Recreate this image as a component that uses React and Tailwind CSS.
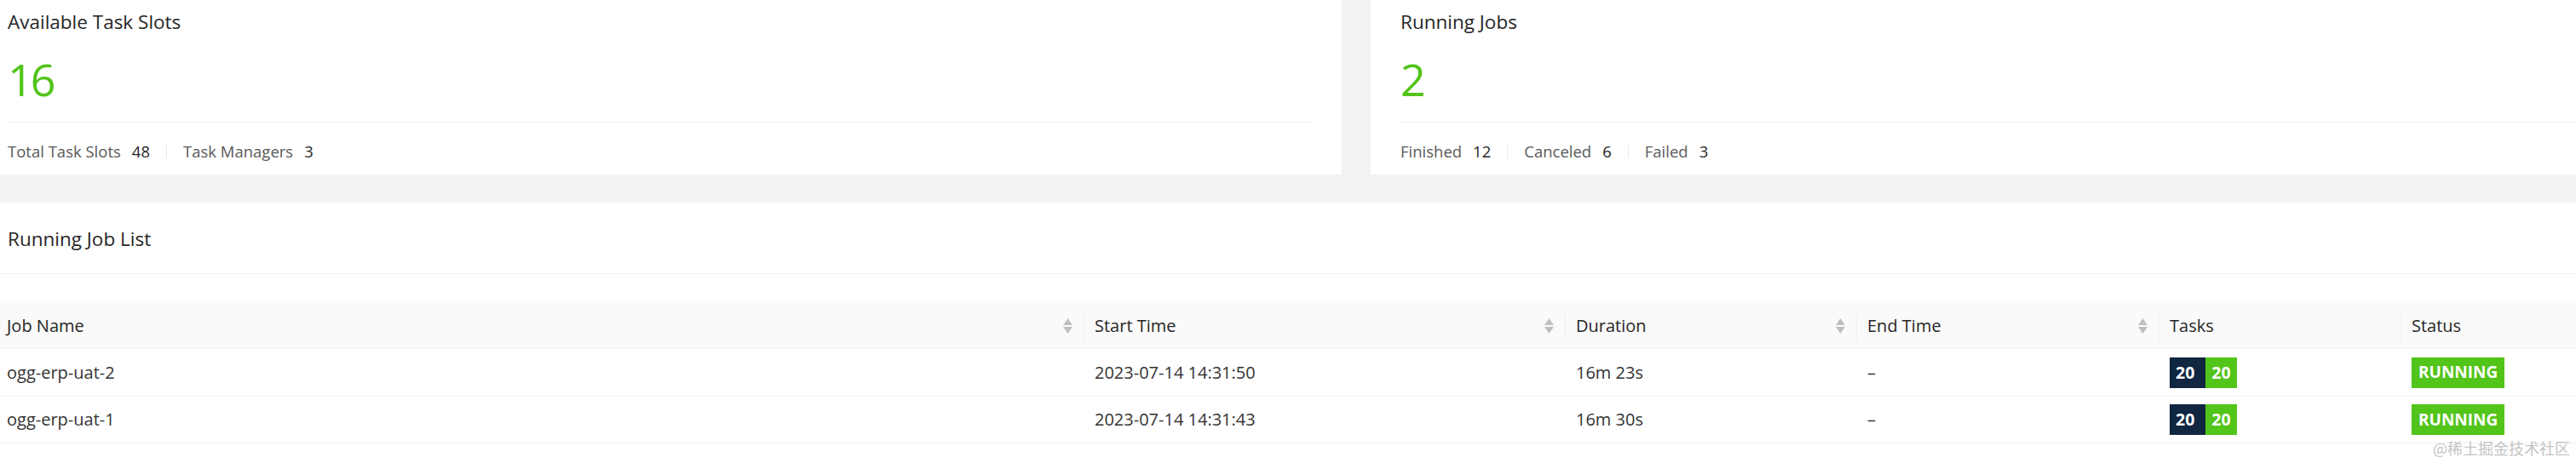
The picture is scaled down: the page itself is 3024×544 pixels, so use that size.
import React from 'react';

const FONT = { fontFamily: '"Open Sans", "Noto Sans", sans-serif' };

const jobs = [
  { name: 'ogg-erp-uat-2', start: '2023-07-14 14:31:50', duration: '16m 23s', end: '–', tasks: [20, 20], status: 'RUNNING' },
  { name: 'ogg-erp-uat-1', start: '2023-07-14 14:31:43', duration: '16m 30s', end: '–', tasks: [20, 20], status: 'RUNNING' },
];

const columns = [
  { title: 'Job Name', sort: true },
  { title: 'Start Time', sort: true },
  { title: 'Duration', sort: true },
  { title: 'End Time', sort: true },
  { title: 'Tasks', sort: false },
  { title: 'Status', sort: false },
];

const GRID = 'grid grid-cols-[1272px_565px_342px_355px_284px_1fr]';

function SortIcon() {
  return (
    <svg width="11" height="18" viewBox="0 0 11 18" className="shrink-0">
      <path d="M0 8 L5.5 0 L11 8 Z" fill="#bfbfbf" />
      <path d="M0 10 L11 10 L5.5 18 Z" fill="#bfbfbf" />
    </svg>
  );
}

function StatCard({ title, value, items, className }) {
  return (
    <div className={`bg-white pt-[11px] ${className}`}>
      <div className="text-[22.5px] leading-[30px] font-medium text-[#262626]">{title}</div>
      <div className="mt-[22px] text-[52px] leading-[60px] tracking-[-3px] text-[#52c41a]">{value}</div>
      <div className="mt-[20px] border-t border-[#f0f0f0]" />
      <div className="mt-[21px] flex items-center text-[18.5px] leading-[26px]">
        {items.map((it, i) => (
          <React.Fragment key={it.label}>
            {i > 0 && <span className="mx-[19px] h-[15px] w-px bg-[#e8e8e8]" />}
            <span className="text-[#595959]">{it.label}</span>
            <span className="ml-[13px] font-medium text-[#262626]">{it.value}</span>
          </React.Fragment>
        ))}
      </div>
    </div>
  );
}

export default function App() {
  return (
    <div className="relative h-[544px] w-[3024px] overflow-hidden bg-[#f2f2f2]" style={FONT}>
      {/* top statistic cards */}
      <div className="flex h-[205px] gap-[34px]">
        <StatCard
          className="w-[1575px] pl-[9px] pr-[35px]"
          title="Available Task Slots"
          value="16"
          items={[
            { label: 'Total Task Slots', value: '48' },
            { label: 'Task Managers', value: '3' },
          ]}
        />
        <StatCard
          className="flex-1 pl-[35px]"
          title="Running Jobs"
          value="2"
          items={[
            { label: 'Finished', value: '12' },
            { label: 'Canceled', value: '6' },
            { label: 'Failed', value: '3' },
          ]}
        />
      </div>

      {/* running job list */}
      <div className="mt-[33px] h-[306px] bg-white">
        <div className="flex h-[84px] items-center border-b border-[#f0f0f0] pl-[9px] pt-[2px]">
          <span className="text-[22.5px] leading-[30px] font-medium text-[#262626]">Running Job List</span>
        </div>
        <div className="pt-[34px]">
          <div className={`${GRID} h-[54px] border-b border-[#f0f0f0] bg-[#fafafa]`}>
            {columns.map((c, i) => (
              <div
                key={c.title}
                className={`relative flex items-center justify-between pr-[13px] ${i === 0 ? 'pl-[8px]' : 'pl-[13px]'}`}
              >
                {i > 0 && <span className="absolute left-0 top-[12px] h-[32px] w-px bg-[#f0f0f0]" />}
                <span className="text-[20px] font-medium text-[#262626]">{c.title}</span>
                {c.sort && <SortIcon />}
              </div>
            ))}
          </div>
          {jobs.map((j, r) => (
            <div
              key={j.name}
              className={`${GRID} ${r === 0 ? 'h-[56px]' : 'h-[55px]'} border-b border-[#f0f0f0] text-[20px] text-[#333333]`}
            >
              <div className="flex items-center pl-[8px]">{j.name}</div>
              <div className="flex items-center pl-[13px]">{j.start}</div>
              <div className="flex items-center pl-[13px]">{j.duration}</div>
              <div className="flex items-center pl-[13px]">{j.end}</div>
              <div className="flex items-center pl-[13px]">
                <div className="flex h-[36px] text-[19.5px] font-bold text-white">
                  <span className="flex items-center bg-[#112641] pl-[7px] pr-[13px]">{j.tasks[0]}</span>
                  <span className="flex items-center bg-[#52c41a] px-[7px]">{j.tasks[1]}</span>
                </div>
              </div>
              <div className="flex items-center pl-[13px]">
                <span className="flex h-[36px] items-center bg-[#52c41a] px-[8px] text-[19px] font-bold text-white">
                  {j.status}
                </span>
              </div>
            </div>
          ))}
        </div>
      </div>

      {/* watermark */}
      <div
        className="absolute bottom-[7px] right-[7px] text-[18px] leading-[22px] text-[#c4c4c4]"
        style={{ fontFamily: '"Noto Sans CJK SC", sans-serif' }}
      >
        @稀土掘金技术社区
      </div>
    </div>
  );
}
